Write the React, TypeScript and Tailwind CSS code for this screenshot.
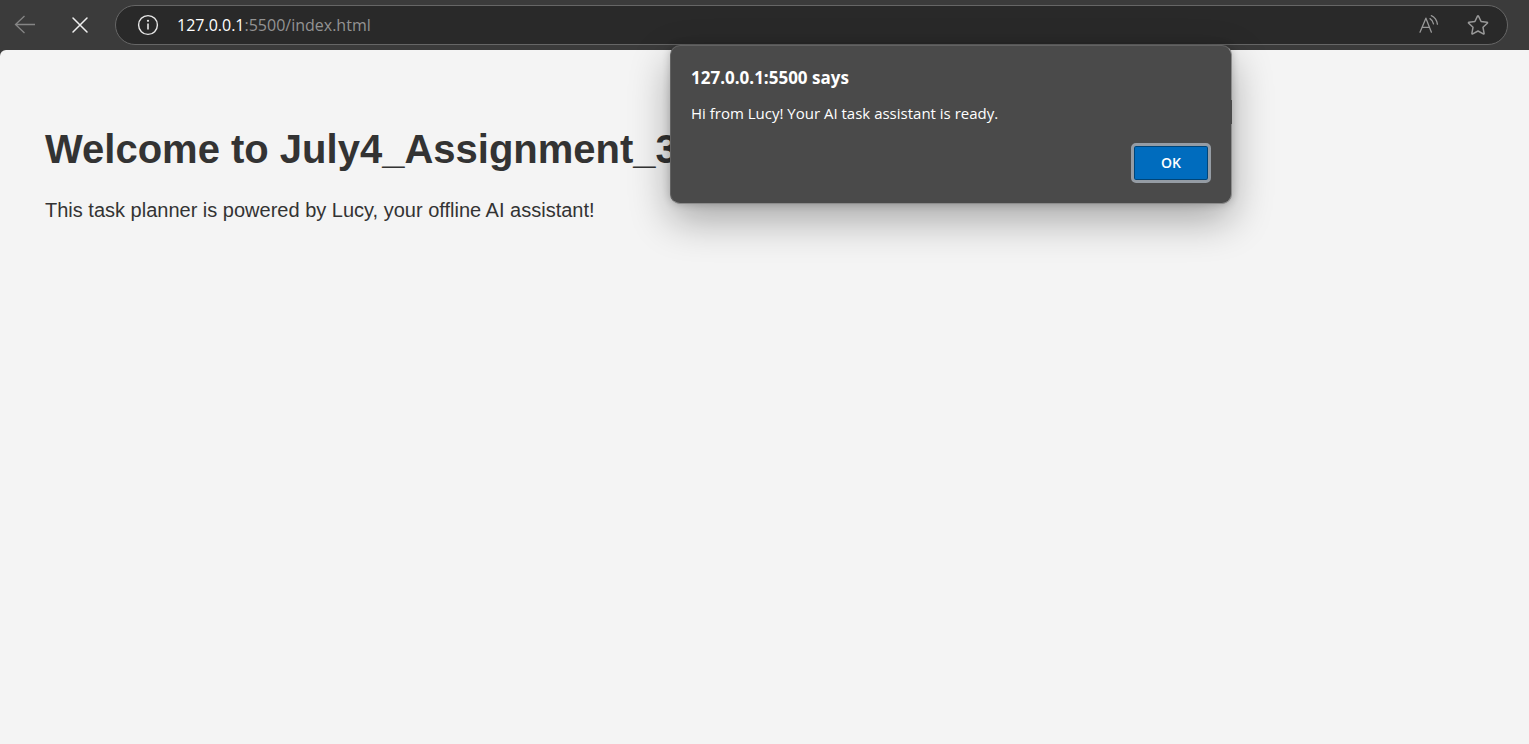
import type { ReactNode } from "react";

const uiFont = "font-['Open_Sans','Noto_Sans',sans-serif]";

function IconButton({ label, className, children }: { label: string; className: string; children: ReactNode }) {
  return (
    <button type="button" aria-label={label} className={`flex size-8 shrink-0 items-center justify-center ${className}`}>
      {children}
    </button>
  );
}

function BackIcon() {
  return (
    <svg width="22" height="20" viewBox="0 0 22 20" fill="none" stroke="currentColor" strokeWidth="1.3">
      <path d="M21 9.5H1.5M10.5 1L1.5 9.5L10.5 18" />
    </svg>
  );
}

function StopIcon() {
  return (
    <svg width="18" height="18" viewBox="0 0 18 18" fill="none" stroke="currentColor" strokeWidth="1.5" strokeLinecap="round">
      <path d="M2 2L16 16M16 2L2 16" />
    </svg>
  );
}

function InfoIcon() {
  return (
    <svg width="22" height="22" viewBox="0 0 22 22" fill="none" stroke="currentColor" strokeWidth="1.4">
      <circle cx="11" cy="11" r="9.4" />
      <path d="M11 9.5V15.5" strokeWidth="1.6" />
      <circle cx="11" cy="6.8" r="1.1" fill="currentColor" stroke="none" />
    </svg>
  );
}

function ReadAloudIcon() {
  return (
    <svg width="22" height="20" viewBox="0 0 22 20" fill="none" stroke="currentColor" strokeWidth="1.3" strokeLinecap="round" strokeLinejoin="round">
      <path d="M2 17.2L7.9 3.2L13.4 17.2M4 12.3H11.5" />
      <path d="M12 3.6C13.8 4.7 15 6.4 15.5 8.8" />
      <path d="M13.3 0.7C16.6 2.2 18.8 5.2 19.4 9.2" />
    </svg>
  );
}

function StarIcon() {
  return (
    <svg width="22" height="22" viewBox="0 0 22 22" fill="none" stroke="currentColor" strokeWidth="1.5" strokeLinejoin="round">
      <path d="M10.5 2.1Q11 1.2 11.5 2.1L14.1 7.5L20 8.3Q21 8.5 20.3 9.2L16 13.3L17.1 19.3Q17.2 20.3 16.3 19.9L11 17L5.7 19.9Q4.8 20.3 4.9 19.3L6 13.3L1.7 9.2Q1 8.5 2 8.3L7.9 7.5Z" />
    </svg>
  );
}

function Toolbar() {
  return (
    <header className={`flex h-[50px] items-center bg-[#3b3b3b] pr-[21px] pl-[9px] ${uiFont}`}>
      <IconButton label="Back" className="text-[#858585]">
        <BackIcon />
      </IconButton>
      <IconButton label="Stop loading" className="ml-[23px] text-[#f0f0f0]">
        <StopIcon />
      </IconButton>
      <div className="ml-[19px] flex h-10 min-w-0 flex-1 items-center rounded-full border border-[#666] bg-[#292929] pr-[13px] pl-[16px]">
        <IconButton label="View site information" className="text-[#e8e8e8]">
          <InfoIcon />
        </IconButton>
        <a href="#address" className="ml-[13px] flex-1 truncate text-[16px] leading-6 text-[#939393]">
          <span className="text-white">127.0.0.1</span>:5500/index.html
        </a>
        <IconButton label="Read aloud" className="text-[#999]">
          <ReadAloudIcon />
        </IconButton>
        <IconButton label="Add to favorites" className="ml-[17px] text-[#999]">
          <StarIcon />
        </IconButton>
      </div>
    </header>
  );
}

function AlertDialog() {
  return (
    <div
      role="alertdialog"
      aria-labelledby="alert-title"
      aria-describedby="alert-message"
      className={`absolute top-[45px] left-[670px] flex w-[562px] flex-col rounded-[10px] border border-[#626262] border-r-[#8c8c8c] border-b-[#8c8c8c] bg-[#4a4a4a] p-5 text-white shadow-[0_16px_40px_rgba(0,0,0,0.32),0_0_8px_rgba(0,0,0,0.2)] ${uiFont}`}
    >
      <span aria-hidden="true" className="absolute top-[54px] -right-px h-6 w-px bg-[#4a4a4a]" />
      <h2 id="alert-title" className="text-[17px] leading-6 font-bold">
        127.0.0.1:5500 says
      </h2>
      <p id="alert-message" className="mt-[11px] text-[15px] leading-6">
        Hi from Lucy! Your AI task assistant is ready.
      </p>
      <button
        type="button"
        className="mt-[18px] flex h-10 w-20 items-center justify-center self-end rounded-[5px] border-3 border-[#959ca4] bg-[#006cbe] pb-[2px] text-[14px] font-semibold text-white inset-ring inset-ring-[#004578]"
      >
        OK
      </button>
    </div>
  );
}

export default function App() {
  return (
    <div className="relative flex min-h-screen flex-col bg-[#3b3b3b]">
      <Toolbar />
      <main className="flex-1 rounded-tl-[6px] bg-[#f4f4f4] px-[45px] pt-[76px] font-['Liberation_Sans',Arial,sans-serif] text-[#333]">
        <h1 className="text-[40px] leading-[46px] font-bold">Welcome to July4_Assignment_3</h1>
        <p className="mt-[26px] text-[20px] leading-6">This task planner is powered by Lucy, your offline AI assistant!</p>
      </main>
      <AlertDialog />
    </div>
  );
}
